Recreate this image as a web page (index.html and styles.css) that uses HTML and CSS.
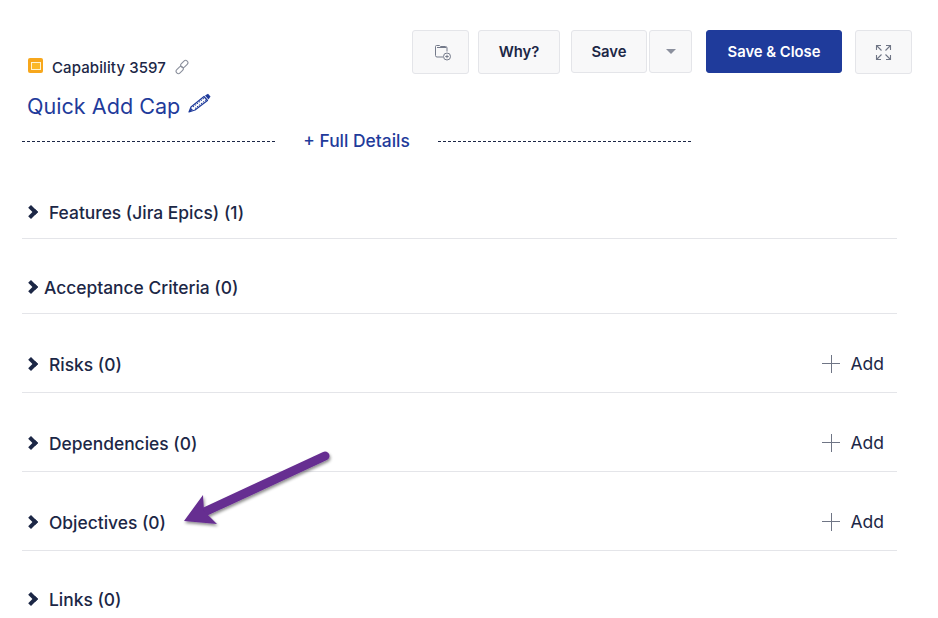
FILE: index.html
```html
<!DOCTYPE html>
<html lang="en">
<head>
    <meta charset="UTF-8">
    <meta name="viewport" content="width=device-width, initial-scale=1.0">
    <title>Capability 3597 - Quick Add Cap</title>
    <link rel="stylesheet" href="styles.css">
</head>
<body>
    <div class="page">
        <!-- Header -->
        <div class="header">
            <div class="title-block">
                <div class="cap-id">
                    <span class="cap-icon"><span></span></span>
                    <span>Capability 3597</span>
                    <svg class="link-icon" width="16" height="16" viewBox="0 0 16 16" fill="none" stroke="#8a8f9c" stroke-width="1.1">
                        <rect x="8" y="0.9" width="4.6" height="8.2" rx="2.3" transform="rotate(45 10.3 5)"/>
                        <rect x="3.4" y="6.9" width="4.6" height="8.2" rx="2.3" transform="rotate(45 5.7 11)"/>
                    </svg>
                </div>
                <div class="cap-title">
                    <span>Quick Add Cap</span>
                    <svg class="pencil-icon" width="23" height="20" viewBox="0 0 23 20">
                        <path d="M1 19 L3 14 L16 3.5 L19.5 7.5 L7 17 Z" fill="#fff" stroke="#1f3b9b" stroke-width="1.2" stroke-linejoin="round"/>
                        <path d="M5 14 L17 4.5 M7 15.5 L18.5 6.5" stroke="#1f3b9b" stroke-width="1" stroke-dasharray="1.5 1"/>
                        <path d="M1 19 L3 15 L5 17 Z" fill="#1f3b9b"/>
                        <path d="M17 2.5 L20 0.8 L22.5 3.5 L20.5 6.5 Z" fill="#1f3b9b"/>
                    </svg>
                </div>
            </div>
            <div class="toolbar">
                <button class="btn btn-icon btn-folder">
                    <svg width="18" height="17" viewBox="0 0 18 17" fill="none" stroke="#747a8a" stroke-width="1">
                        <path d="M1.5 2.5 V11.5 Q1.5 13 3 13 H9"/>
                        <path d="M1.5 2.5 Q1.5 1.5 2.5 1.5 H5.5 L6.5 2.5 H11.5 Q13 2.5 13 4 V7.5"/>
                        <path d="M3 3.5 H12"/>
                        <circle cx="13" cy="12.5" r="3.5"/>
                        <path d="M11.3 12.5 H14.7 M13 10.8 V14.2"/>
                    </svg>
                </button>
                <button class="btn btn-why">Why?</button>
                <div class="save-group">
                    <button class="btn btn-save">Save</button>
                    <button class="btn btn-caret"><span class="caret"></span></button>
                </div>
                <button class="btn btn-primary">Save &amp; Close</button>
                <button class="btn btn-icon btn-expand">
                    <svg width="17" height="17" viewBox="0 0 17 17" fill="none" stroke="#6f7585" stroke-width="1.1">
                        <path d="M1.5 6 V1.5 H6 M1.5 1.5 L6.5 6.5"/>
                        <path d="M15.5 6 V1.5 H11 M15.5 1.5 L10.5 6.5"/>
                        <path d="M1.5 11 V15.5 H6 M1.5 15.5 L6.5 10.5"/>
                        <path d="M15.5 11 V15.5 H11 M15.5 15.5 L10.5 10.5"/>
                    </svg>
                </button>
            </div>
        </div>

        <!-- Full details divider -->
        <div class="details-divider">
            <span class="dash"></span>
            <a class="details-link">+ Full Details</a>
            <span class="dash"></span>
        </div>

        <!-- Sections -->
        <div class="sections">
            <div class="section section-features">
                <div class="section-name"><span class="chevron"></span><span class="name-gap">Features (Jira Epics) (1)</span></div>
            </div>
            <div class="section section-criteria">
                <div class="section-name"><span class="chevron"></span><span>Acceptance Criteria (0)</span></div>
            </div>
            <div class="section section-add">
                <div class="section-name"><span class="chevron"></span><span class="name-gap">Risks (0)</span></div>
                <a class="add-link"><span class="plus"></span>Add</a>
            </div>
            <div class="section section-add">
                <div class="section-name"><span class="chevron"></span><span class="name-gap">Dependencies (0)</span></div>
                <a class="add-link"><span class="plus"></span>Add</a>
            </div>
            <div class="section section-add">
                <div class="section-name"><span class="chevron"></span><span class="name-gap">Objectives (0)</span></div>
                <a class="add-link"><span class="plus"></span>Add</a>
            </div>
            <div class="section section-last">
                <div class="section-name"><span class="chevron"></span><span class="name-gap">Links (0)</span></div>
            </div>
        </div>

        <!-- Annotation arrow -->
        <svg class="arrow" width="938" height="618" viewBox="0 0 938 618">
            <defs>
                <filter id="arrowShadow" x="-20%" y="-20%" width="140%" height="140%">
                    <feDropShadow dx="1" dy="2" stdDeviation="1.5" flood-color="#000" flood-opacity="0.45"/>
                </filter>
            </defs>
            <g filter="url(#arrowShadow)">
                <path d="M325 456 L200 514" stroke="#662d91" stroke-width="9" stroke-linecap="round" fill="none"/>
                <path d="M203 495 L184 521 L217 524 L204 511 Z" fill="#662d91"/>
            </g>
        </svg>
    </div>
</body>
</html>
```

FILE: styles.css
```css
* {
    box-sizing: border-box;
}

html, body {
    margin: 0;
    height: 100%;
    overflow: hidden;
    background: #fff;
}

.page {
    position: relative;
    height: 618px;
    padding: 30px 26px 0 22px;
    font-family: Inter, "Noto Sans", sans-serif;
    color: #1c2746;
}

/* Header */
.header {
    display: flex;
    justify-content: space-between;
    align-items: flex-start;
    height: 99px;
}

.title-block {
    padding: 28px 0 0 6px;
}

.cap-id {
    display: flex;
    align-items: center;
    height: 18px;
    font-size: 15px;
    font-weight: 500;
    letter-spacing: 0.1px;
}

.cap-icon {
    display: flex;
    justify-content: center;
    align-items: center;
    width: 15px;
    height: 15px;
    margin: -3px 9px 0 0;
    background: #f7a71c;
    border-radius: 2px;
}

.cap-icon span {
    width: 10px;
    height: 8px;
    background: #fbb829;
    border: 1px solid #fff3d0;
}

.link-icon {
    margin-left: 8px;
}

.cap-title {
    display: flex;
    align-items: center;
    margin: 17px 0 0 -1px;
    height: 26px;
    font-size: 21.6px;
    font-weight: 400;
    color: #1f3b9b;
}

.pencil-icon {
    margin: -6px 0 0 8px;
}

/* Toolbar */
.toolbar {
    display: flex;
    align-items: flex-start;
}

.btn {
    display: flex;
    justify-content: center;
    align-items: center;
    height: 44px;
    padding: 0;
    background: #f8f8f9;
    border: 1px solid #e4e5e9;
    border-radius: 3px;
    font-family: inherit;
    font-size: 14.8px;
    font-weight: 600;
    color: #1c2746;
}

.btn-icon {
    width: 57px;
}

.btn-folder {
    padding-left: 5px;
}

.btn-why {
    width: 82px;
    margin-left: 9px;
}

.save-group {
    display: flex;
    gap: 2px;
    margin-left: 11px;
}

.btn-save {
    width: 76px;
    height: 43px;
}

.btn-caret {
    width: 43px;
    height: 43px;
}

.caret {
    width: 0;
    height: 0;
    border-left: 5px solid transparent;
    border-right: 5px solid transparent;
    border-top: 5px solid #8b909e;
}

.btn-primary {
    width: 136px;
    height: 43px;
    margin-left: 14px;
    background: #1f3b9b;
    border-color: #1f3b9b;
    color: #fff;
}

.btn-expand {
    margin-left: 13px;
}

/* Divider */
.details-divider {
    display: flex;
    align-items: center;
    width: 669px;
    height: 24px;
}

.dash {
    flex: 1;
    border-top: 1px dashed #1c2746;
}

.details-link {
    padding: 0 28px 2px;
    font-size: 17.4px;
    font-weight: 500;
    color: #1f3b9b;
}

/* Sections */
.sections {
    width: 875px;
    margin-top: 27px;
}

.section {
    display: flex;
    justify-content: space-between;
    align-items: center;
    border-bottom: 1px solid #e4e5e9;
    padding-right: 13px;
    font-size: 17.4px;
    font-weight: 500;
}

.section-features {
    height: 59px;
    padding-top: 6px;
}

.section-criteria {
    height: 75px;
    padding-top: 22px;
}

.section-add {
    height: 79px;
    padding-top: 22px;
}

.section-last {
    height: 79px;
    padding-top: 17px;
    border-bottom: 0;
}

.section-name {
    display: flex;
    align-items: center;
    padding-left: 4px;
}

.chevron {
    width: 10px;
    height: 10px;
    margin-right: 8px;
    border-top: 4px solid #1c2746;
    border-right: 4px solid #1c2746;
    transform: rotate(45deg);
}

.name-gap {
    margin-left: 5px;
}

.add-link {
    display: flex;
    align-items: center;
    margin-bottom: 1px;
    font-size: 17.5px;
    font-weight: 400;
    color: #1c2746;
}

.plus {
    width: 18px;
    height: 18px;
    margin-right: 10px;
    background:
        linear-gradient(#6f7585, #6f7585) center / 100% 1px no-repeat,
        linear-gradient(#6f7585, #6f7585) center / 1px 100% no-repeat;
}

/* Arrow sits over the rows */
.arrow {
    position: absolute;
    top: 0;
    left: 0;
    pointer-events: none;
}
```
